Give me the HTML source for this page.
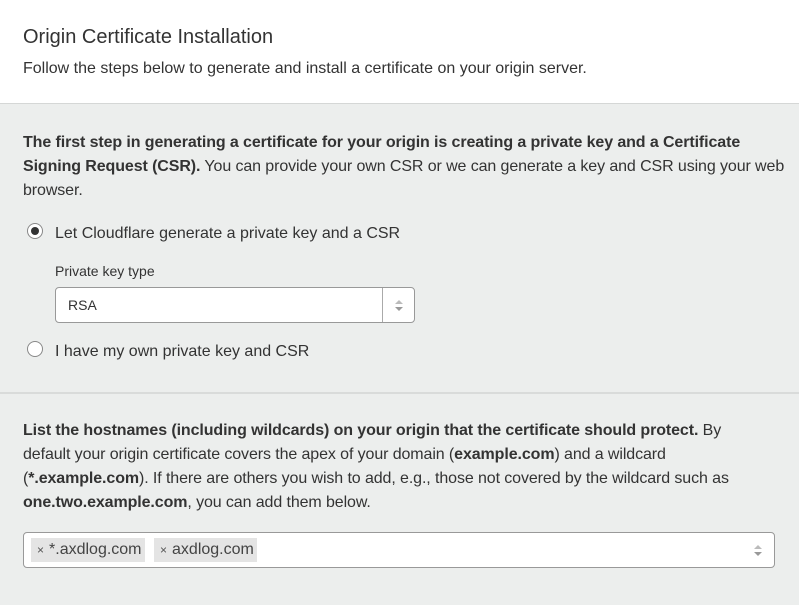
<!DOCTYPE html>
<html><head><style>
*{box-sizing:border-box;margin:0;padding:0}
body{width:799px;height:605px;overflow:hidden;background:#eceeed;font-family:"Liberation Sans",sans-serif;color:#333;font-size:16px}
.top{background:#fff;height:104px;border-bottom:1px solid #d5d7d6;padding:25px 23px 0}
.top h1{font-weight:normal;font-size:20px;color:#333;line-height:24px}
.top p{margin-top:9px;line-height:22px;color:#333}
.sec{padding:0 23px;position:relative}
.s1{height:290px;border-bottom:2px solid #d9dbda}
.para{line-height:24px;color:#333;white-space:nowrap;letter-spacing:-0.1px}
b{color:#333}
.radio{position:absolute;left:27px;width:16px;height:16px;border-radius:50%;border:1px solid #888;background:#fff}
.radio.on:after{content:"";position:absolute;left:3px;top:3px;width:8px;height:8px;border-radius:50%;background:#333}
.rl{position:absolute;left:55px}
.sel{position:absolute;left:55px;top:183px;width:360px;height:36px;background:#fff;border:1px solid #999;border-radius:4px;font-size:14px;padding:0 12px;line-height:34px}
.arr{position:absolute;right:0;top:0;width:32px;height:34px;border-left:1px solid #aaa}
.arr:before,.arr:after{content:"";position:absolute;left:12px;border-left:4px solid transparent;border-right:4px solid transparent}
.arr:before{top:12px;border-bottom:4px solid #bbb}
.arr:after{top:19px;border-top:4px solid #999}
.tags{position:absolute;left:23px;top:138px;width:752px;height:36px;background:#fff;border:1px solid #999;border-radius:4px}
.tag{position:absolute;top:5px;height:24px;background:#e4e4e4;line-height:24px;padding:0 3px 0 6px;font-size:16px;color:#444}
.tag small{font-size:12px;color:#555;margin-right:5px}
</style></head><body>
<div class="top"><h1>Origin Certificate Installation</h1><p>Follow the steps below to generate and install a certificate on your origin server.</p></div>
<div class="sec s1">
<p class="para" style="padding-top:27px"><b>The first step in generating a certificate for your origin is creating a private key and a Certificate</b><br><b>Signing Request (CSR).</b> You can provide your own CSR or we can generate a key and CSR using your web<br>browser.</p>
<div class="radio on" style="top:119px"></div><div class="rl" style="top:121px">Let Cloudflare generate a private key and a CSR</div>
<div class="rl" style="top:159px;font-size:14px">Private key type</div>
<div class="sel">RSA<div class="arr"></div></div>
<div class="radio" style="top:237px"></div><div class="rl" style="top:239px">I have my own private key and CSR</div>
</div>
<div class="sec">
<p class="para" style="padding-top:25px"><b>List the hostnames (including wildcards) on your origin that the certificate should protect.</b> By<br>default your origin certificate covers the apex of your domain (<b>example.com</b>) and a wildcard<br>(<b>*.example.com</b>). If there are others you wish to add, e.g., those not covered by the wildcard such as<br><b>one.two.example.com</b>, you can add them below.</p>
<div class="tags"><div class="tag" style="left:7px"><small>×</small>*.axdlog.com</div><div class="tag" style="left:130px"><small>×</small>axdlog.com</div><div class="arr" style="border:none"></div></div>
</div>
</body></html>
